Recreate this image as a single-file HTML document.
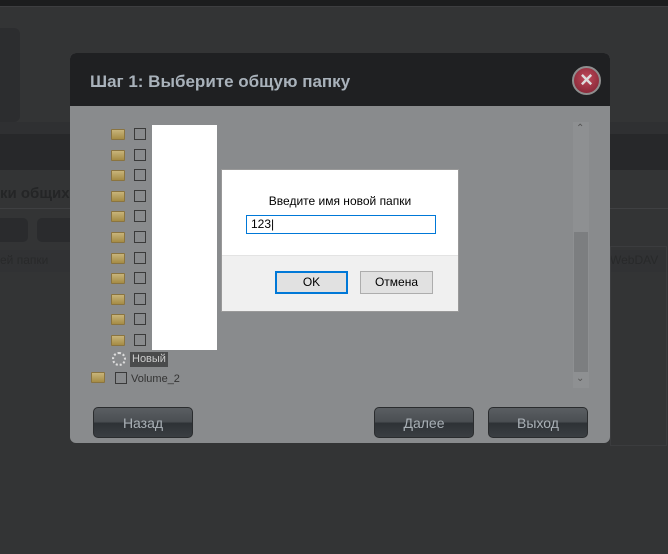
<!DOCTYPE html>
<html><head><meta charset="utf-8"><style>
*{margin:0;padding:0;box-sizing:border-box}
body{width:668px;height:554px;overflow:hidden;background:#333435;font-family:"Liberation Sans",sans-serif;position:relative}
.a{position:absolute}
.fold{position:absolute;width:14px;height:11px;background:linear-gradient(#c8b47a,#a58c45);border:1px solid #8a7440;border-radius:1px}
.cb{position:absolute;width:12px;height:12px;border:1px solid #3a3a3a}
.btn{position:absolute;height:31px;width:100px;border:1px solid #2a2c2e;border-radius:5px;background:linear-gradient(#5a5e62 0%,#4a4e52 48%,#2e3236 52%,#3a3e42 100%);color:#a9b0b6;font-size:14px;text-align:center;line-height:31px}
</style></head><body>
<div class="a" style="left:0;top:0;width:668px;height:6px;background:#1c1d1e"></div>
<div class="a" style="left:0;top:6px;width:668px;height:1px;background:#3d3e40"></div>
<div class="a" style="left:0;top:28px;width:20px;height:94px;background:#2c2d2f;border-radius:0 6px 6px 0"></div>
<div class="a" style="left:0;top:122px;width:668px;height:12px;background:#2f3032"></div>
<div class="a" style="left:0;top:134px;width:668px;height:36px;background:#27282a"></div>
<div class="a" style="left:0;top:208px;width:668px;height:1px;background:#3f4042"></div>
<div class="a" style="left:0;top:185px;font-size:15px;font-weight:bold;color:#242526">ки общих с</div>
<div class="a" style="left:-10px;top:218px;width:38px;height:24px;background:#2a2b2d;border-radius:5px"></div>
<div class="a" style="left:37px;top:218px;width:40px;height:24px;background:#2a2b2d;border-radius:5px"></div>
<div class="a" style="left:0;top:250px;width:668px;height:22px;background:#313234"></div>
<div class="a" style="left:0;top:253px;font-size:12px;color:#28292a">ей папки</div>
<div class="a" style="left:610px;top:253px;font-size:12px;color:#28292a">WebDAV</div>
<div class="a" style="left:610px;top:246px;width:57px;height:200px;border:1px solid #3b3c3e"></div>

<div class="a" style="left:70px;top:53px;width:540px;height:390px;background:#898b8d;border-radius:6px;overflow:hidden">
 <div class="a" style="left:0;top:0;width:540px;height:53px;background:#1f2022"></div>
 <div class="a" style="left:20px;top:19px;font-size:17px;font-weight:bold;color:#a9b2bb">Шаг 1: Выберите общую папку</div>
 <div class="a" style="left:502px;top:13px;width:29px;height:29px;border-radius:50%;background:radial-gradient(circle at 50% 40%,#c04a5a,#7a2030);border:2px solid #8e8e8e;color:#ddd;font-size:22px;line-height:24px;text-align:center;font-weight:bold">×</div>
 <div class="a" style="left:503px;top:69px;width:16px;height:266px;background:#8e9092"></div>
 <div class="a" style="left:504px;top:179px;width:14px;height:140px;background:#7c7e80"></div>
 <div class="a" style="left:506px;top:70px;font-size:10px;color:#555">&#8963;</div>
 <div class="a" style="left:506px;top:320px;font-size:10px;color:#555">&#8964;</div>
 <div class="btn" style="left:23px;top:354px">Назад</div>
 <div class="btn" style="left:304px;top:354px">Далее</div>
 <div class="btn" style="left:418px;top:354px">Выход</div>
</div>
<div id="rows"></div>
<script>
var h='';for(var i=0;i<11;i++){var y=127+i*20.6;h+='<div class="fold" style="left:111px;top:'+(y+2)+'px"></div><div class="cb" style="left:134px;top:'+(y+1)+'px"></div>';}
document.getElementById('rows').innerHTML=h;
</script>
<div class="a" style="left:152px;top:125px;width:65px;height:225px;background:#fff"></div>
<div class="a" style="left:112px;top:352px;width:14px;height:14px;border-radius:50%;border:2px dotted #ddd"></div>
<div class="a" style="left:130px;top:352px;height:15px;padding:0 2px;background:#4a4b4c;color:#ccc;font-size:11px;line-height:15px">Новый</div>
<div class="fold" style="left:91px;top:372px"></div>
<div class="cb" style="left:115px;top:372px"></div>
<div class="a" style="left:131px;top:373px;font-size:11px;color:#333">Volume_2</div>

<div class="a" style="left:221px;top:169px;width:238px;height:143px;background:#f0f0f0;border:1px solid #999">
 <div class="a" style="left:0;top:0;width:236px;height:86px;background:#fff;border-bottom:1px solid #e3e3e3"></div>
 <div class="a" style="left:0;top:24px;width:236px;text-align:center;font-size:12px;color:#000">Введите имя новой папки</div>
 <div class="a" style="left:24px;top:45px;width:190px;height:19px;border:1px solid #0078d7;background:#fff;font-size:12px;line-height:17px;padding-left:4px">123|</div>
 <div class="a" style="left:53px;top:101px;width:73px;height:23px;border:2px solid #0078d7;background:#e1e1e1;font-size:12px;text-align:center;line-height:19px">OK</div>
 <div class="a" style="left:138px;top:101px;width:73px;height:23px;border:1px solid #adadad;background:#e1e1e1;font-size:12px;text-align:center;line-height:21px">Отмена</div>
</div>
</body></html>
